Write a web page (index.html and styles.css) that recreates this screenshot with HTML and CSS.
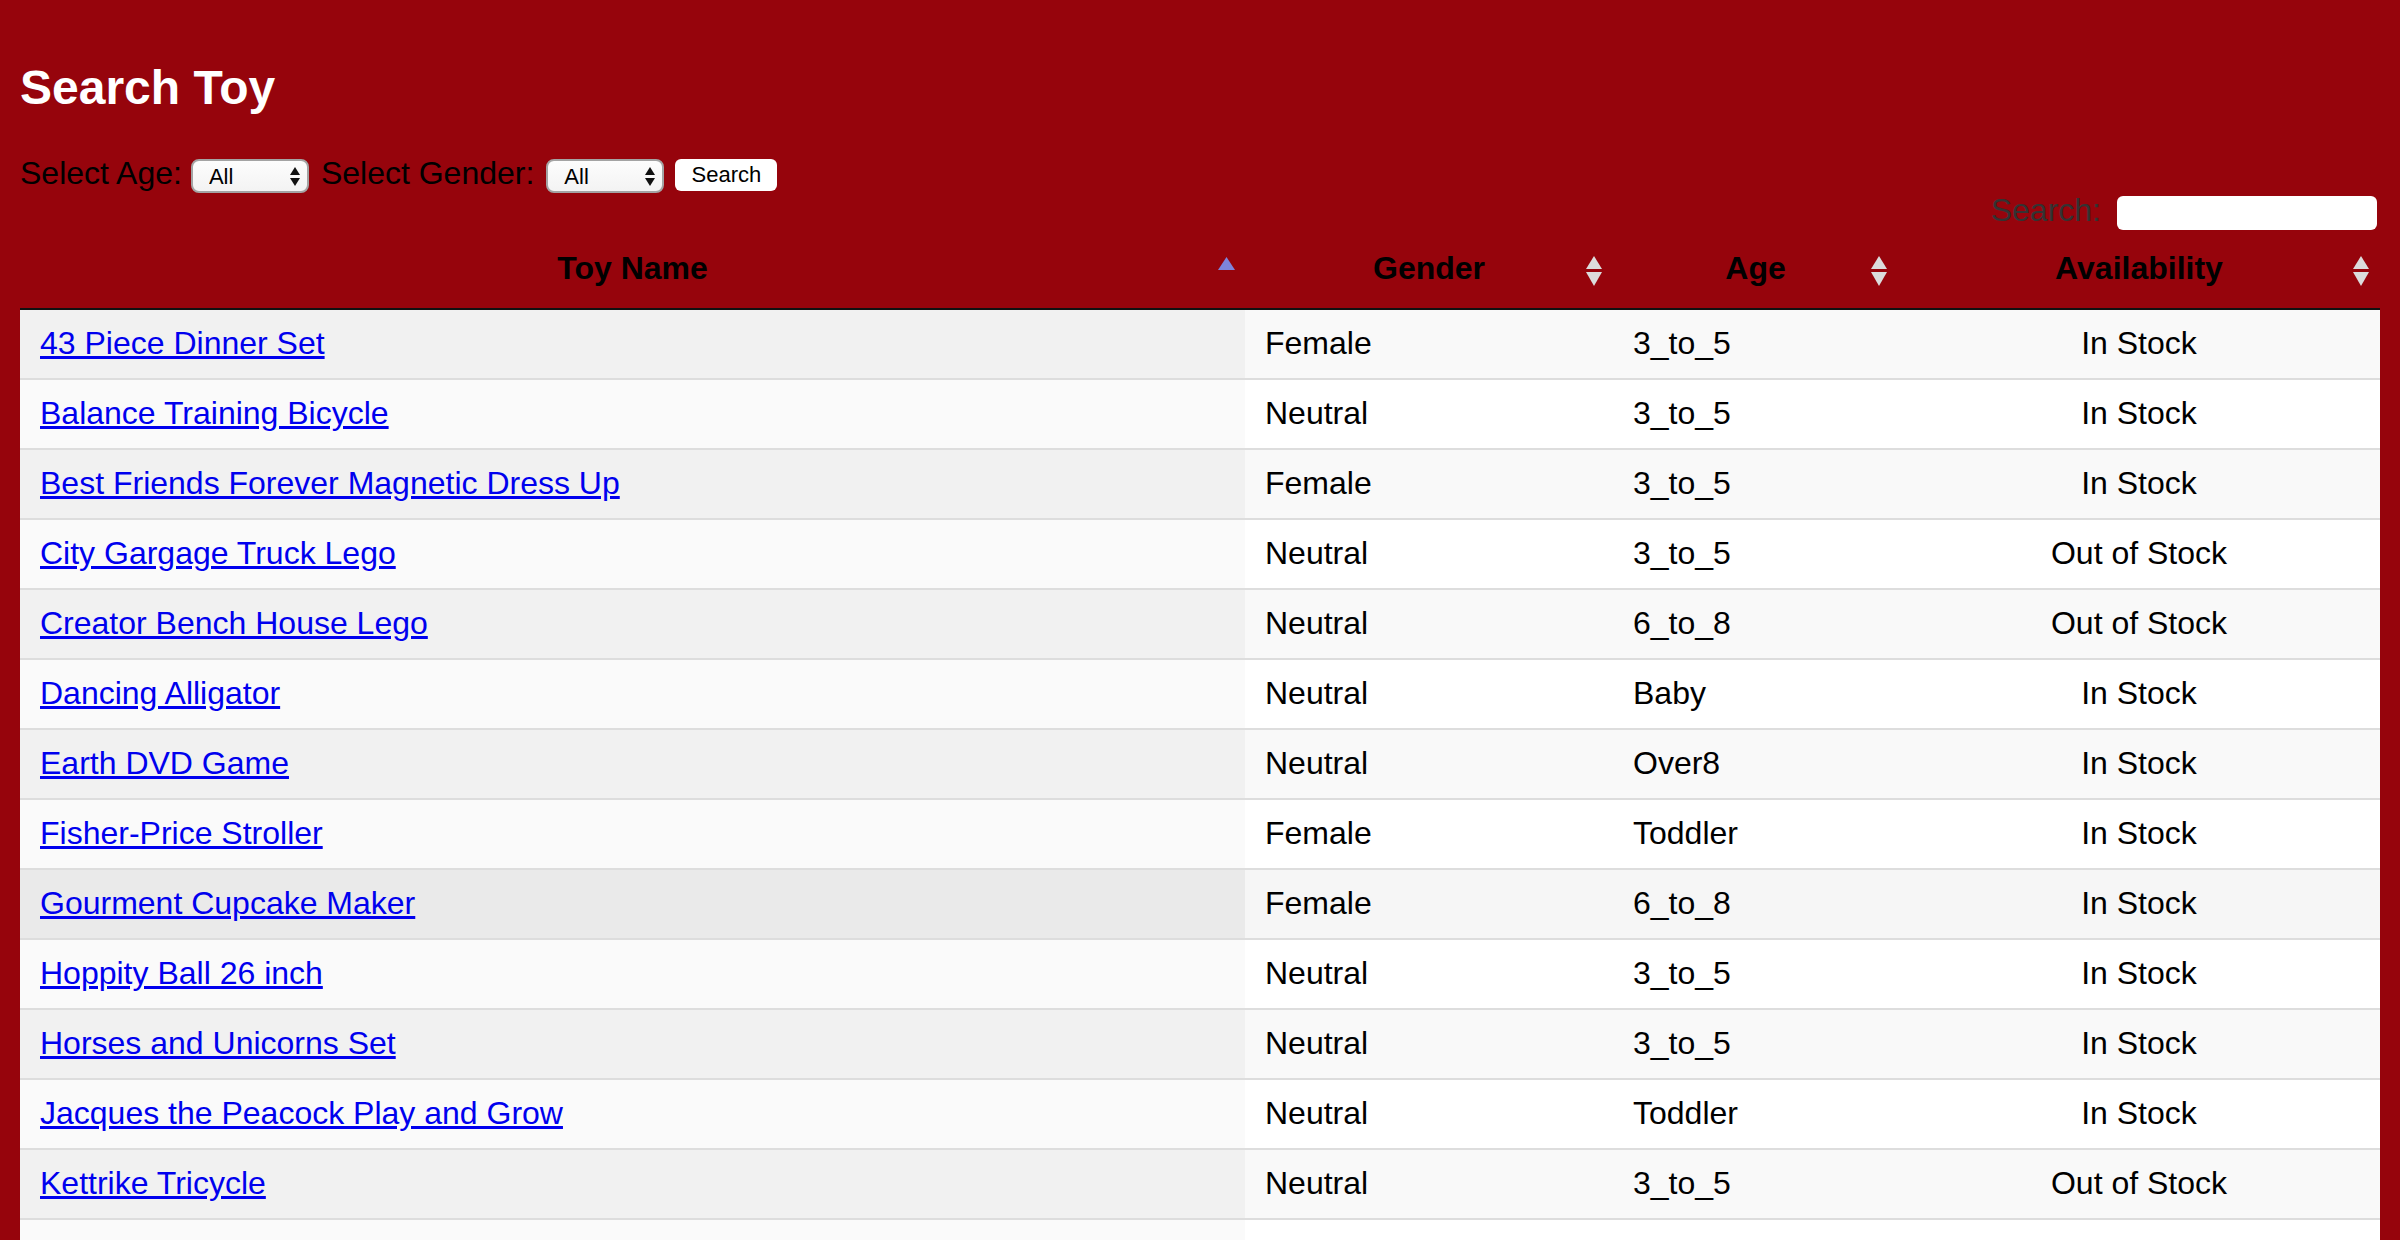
FILE: index.html
```html
<!DOCTYPE html>
<html lang="en">
<head>
<meta charset="utf-8">
<title>Search Toy</title>
<link rel="stylesheet" href="styles.css">
</head>
<body>
<h1 class="title">Search Toy</h1>
<form class="filters">
  <label class="lbl">Select Age:</label>
  <span class="select-wrap age">
    <select class="sel"><option>All</option></select>
    <svg class="sel-arrows" viewBox="0 0 10 19" width="10" height="19"><polygon points="0,8 5,0 10,8"/><polygon points="0,11 10,11 5,19"/></svg>
  </span>
  <label class="lbl">Select Gender:</label>
  <span class="select-wrap gender">
    <select class="sel"><option>All</option></select>
    <svg class="sel-arrows" viewBox="0 0 10 19" width="10" height="19"><polygon points="0,8 5,0 10,8"/><polygon points="0,11 10,11 5,19"/></svg>
  </span>
  <button type="button" class="btn">Search</button>
</form>
<div class="dt-wrapper">
  <div class="dt-filter">
    <label class="dt-label">Search:</label>
    <input type="search" class="dt-input">
  </div>
  <table class="dt">
    <colgroup>
      <col class="c-name"><col class="c-gender"><col class="c-age"><col class="c-avail">
    </colgroup>
    <thead>
      <tr>
        <th>Toy Name<svg class="sort asc" viewBox="0 0 17 13" width="17" height="13"><polygon points="0,13 8.5,0 17,13"/></svg></th>
        <th>Gender<svg class="sort both" viewBox="0 0 16 30" width="16" height="30"><polygon points="0,13 8,0 16,13"/><polygon points="0,16 16,16 8,30"/></svg></th>
        <th>Age<svg class="sort both" viewBox="0 0 16 30" width="16" height="30"><polygon points="0,13 8,0 16,13"/><polygon points="0,16 16,16 8,30"/></svg></th>
        <th>Availability<svg class="sort both" viewBox="0 0 16 30" width="16" height="30"><polygon points="0,13 8,0 16,13"/><polygon points="0,16 16,16 8,30"/></svg></th>
      </tr>
    </thead>
    <tbody>
      <tr class="odd"><td class="s1"><a href="#">43 Piece Dinner Set</a></td><td>Female</td><td>3_to_5</td><td class="ctr">In Stock</td></tr>
      <tr class="even"><td class="s1"><a href="#">Balance Training Bicycle</a></td><td>Neutral</td><td>3_to_5</td><td class="ctr">In Stock</td></tr>
      <tr class="odd"><td class="s1"><a href="#">Best Friends Forever Magnetic Dress Up</a></td><td>Female</td><td>3_to_5</td><td class="ctr">In Stock</td></tr>
      <tr class="even"><td class="s1"><a href="#">City Gargage Truck Lego</a></td><td>Neutral</td><td>3_to_5</td><td class="ctr">Out of Stock</td></tr>
      <tr class="odd"><td class="s1"><a href="#">Creator Bench House Lego</a></td><td>Neutral</td><td>6_to_8</td><td class="ctr">Out of Stock</td></tr>
      <tr class="even"><td class="s1"><a href="#">Dancing Alligator</a></td><td>Neutral</td><td>Baby</td><td class="ctr">In Stock</td></tr>
      <tr class="odd"><td class="s1"><a href="#">Earth DVD Game</a></td><td>Neutral</td><td>Over8</td><td class="ctr">In Stock</td></tr>
      <tr class="even"><td class="s1"><a href="#">Fisher-Price Stroller</a></td><td>Female</td><td>Toddler</td><td class="ctr">In Stock</td></tr>
      <tr class="odd hover"><td class="s1"><a href="#">Gourment Cupcake Maker</a></td><td>Female</td><td>6_to_8</td><td class="ctr">In Stock</td></tr>
      <tr class="even"><td class="s1"><a href="#">Hoppity Ball 26 inch</a></td><td>Neutral</td><td>3_to_5</td><td class="ctr">In Stock</td></tr>
      <tr class="odd"><td class="s1"><a href="#">Horses and Unicorns Set</a></td><td>Neutral</td><td>3_to_5</td><td class="ctr">In Stock</td></tr>
      <tr class="even"><td class="s1"><a href="#">Jacques the Peacock Play and Grow</a></td><td>Neutral</td><td>Toddler</td><td class="ctr">In Stock</td></tr>
      <tr class="odd"><td class="s1"><a href="#">Kettrike Tricycle</a></td><td>Neutral</td><td>3_to_5</td><td class="ctr">Out of Stock</td></tr>
      <tr class="even"><td class="s1">&nbsp;</td><td>&nbsp;</td><td>&nbsp;</td><td class="ctr">&nbsp;</td></tr>
    </tbody>
  </table>
</div>
</body>
</html>
```

FILE: styles.css
```css
html, body {
  margin: 0;
  padding: 0;
}

body {
  background: #96040c;
  padding: 0 20px 40px;
  font-family: "Liberation Sans", Arial, Helvetica, sans-serif;
  font-size: 32px;
  color: #000;
  min-height: 100vh;
  box-sizing: border-box;
}

.title {
  margin: 61px 0 0;
  font-size: 48px;
  line-height: 54px;
  font-weight: bold;
  color: #fff;
}

.filters {
  margin: 43px 0 0;
  height: 36px;
  display: flex;
  align-items: center;
}

.lbl {
  font-size: 32px;
  line-height: 36px;
  color: #000;
  white-space: nowrap;
  margin-bottom: 7px;
}

.select-wrap {
  position: relative;
  display: block;
  width: 118px;
  height: 34px;
}

.select-wrap.age {
  margin: 0 12px 0 9px;
}

.select-wrap.gender {
  margin: 0 11px 0 12px;
}

.sel {
  -webkit-appearance: none;
  appearance: none;
  display: block;
  width: 118px;
  height: 34px;
  box-sizing: border-box;
  margin: 0;
  padding: 0 0 0 16px;
  border: 2px solid #a4a4a4;
  border-radius: 8px;
  background: linear-gradient(#fdfdfd, #f3f3f3);
  font-family: "Liberation Sans", Arial, sans-serif;
  font-size: 22px;
  color: #000;
}

.sel-arrows {
  position: absolute;
  right: 9px;
  top: 8px;
  fill: #111;
  pointer-events: none;
}

.btn {
  width: 102px;
  height: 32px;
  margin: 0 0 2px;
  padding: 0;
  border: none;
  border-radius: 6px;
  background: #fff;
  font-family: "Liberation Sans", Arial, sans-serif;
  font-size: 22px;
  color: #000;
}

.dt-wrapper {
  width: 100%;
}

.dt-filter {
  height: 38px;
  display: flex;
  justify-content: flex-end;
  align-items: center;
}

.dt-label {
  font-size: 32px;
  line-height: 36px;
  color: #333;
  margin-bottom: 6px;
}

.dt-input {
  width: 260px;
  height: 34px;
  box-sizing: border-box;
  margin: 0 3px 0 16px;
  border: none;
  border-radius: 6px;
  background: #fff;
  font-size: 22px;
}

.dt {
  width: 100%;
  table-layout: fixed;
  border-collapse: separate;
  border-spacing: 0;
}

.c-name { width: 1225px; }
.c-gender { width: 368px; }
.c-age { width: 285px; }
.c-avail { width: 482px; }

.dt th {
  position: relative;
  padding: 18px 36px 22px;
  line-height: 36px;
  font-size: 32px;
  font-weight: bold;
  text-align: center;
  color: #000;
  border-bottom: 2px solid #111;
}

.sort {
  position: absolute;
  right: 10px;
}

.sort.asc {
  top: 25px;
  fill: #7d85dc;
}

.sort.both {
  top: 24px;
  right: 11px;
  fill: #dcdcdc;
}

.dt td {
  padding: 15px 20px 17px;
  line-height: 36px;
  font-size: 32px;
  border-top: 2px solid #ddd;
  white-space: nowrap;
  overflow: hidden;
}

.dt tbody tr:first-child td {
  border-top: none;
}

.dt tr.odd td { background: #f9f9f9; }
.dt tr.odd td.s1 { background: #f1f1f1; }
.dt tr.even td { background: #fff; }
.dt tr.even td.s1 { background: #fafafa; }
.dt tr.odd.hover td { background: #f6f6f6; }
.dt tr.odd.hover td.s1 { background: #eaeaea; }

.dt td.ctr {
  text-align: center;
}

.dt a {
  color: #0000ee;
  text-decoration: underline;
}
```
